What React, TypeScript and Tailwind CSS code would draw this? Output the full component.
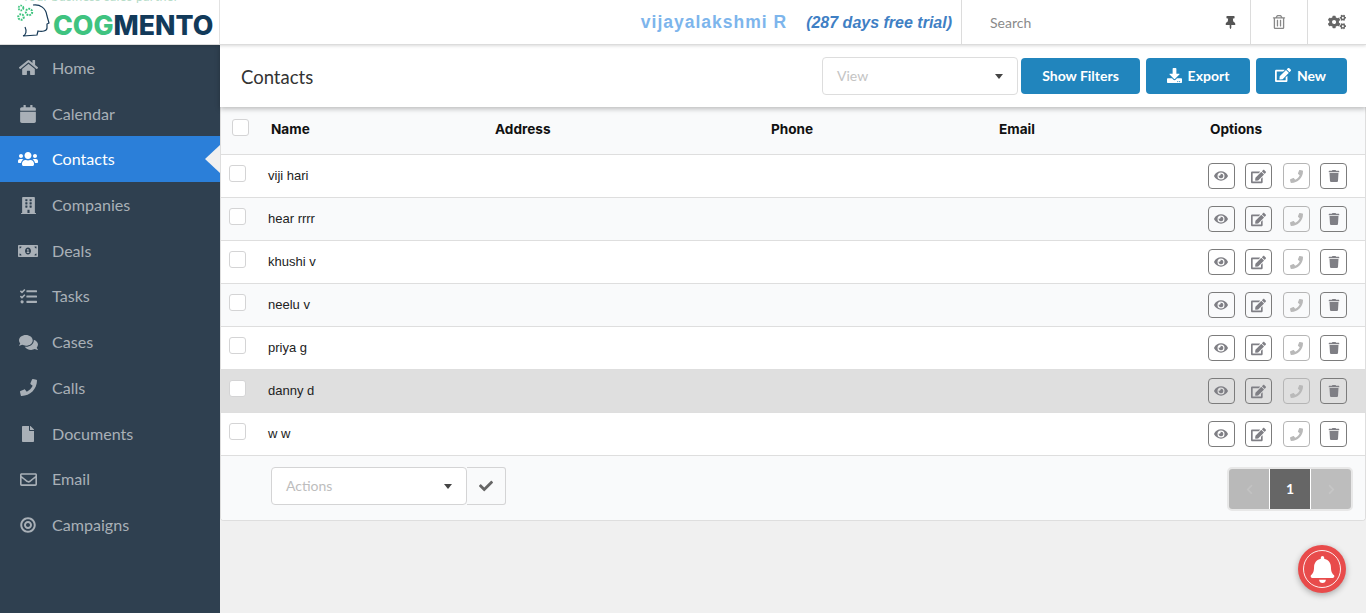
import type { ReactNode } from 'react'
import {
  FaHome,
  FaCalendar,
  FaUsers,
  FaBuilding,
  FaMoneyBillAlt,
  FaTasks,
  FaComments,
  FaPhone,
  FaFile,
  FaRegEnvelope,
  FaBullseye,
  FaEye,
  FaEdit,
  FaTrash,
  FaThumbtack,
  FaRegTrashAlt,
  FaCogs,
  FaDownload,
  FaCheck,
  FaBell,
  FaChevronLeft,
  FaChevronRight,
} from 'react-icons/fa'

const navItems = [
  { label: 'Home', icon: <FaHome size={19} /> },
  { label: 'Calendar', icon: <FaCalendar size={18} /> },
  { label: 'Contacts', icon: <FaUsers size={20} />, active: true },
  { label: 'Companies', icon: <FaBuilding size={17} /> },
  { label: 'Deals', icon: <FaMoneyBillAlt size={20} /> },
  { label: 'Tasks', icon: <FaTasks size={17} /> },
  { label: 'Cases', icon: <FaComments size={19} /> },
  { label: 'Calls', icon: <FaPhone size={17} /> },
  { label: 'Documents', icon: <FaFile size={16} /> },
  { label: 'Email', icon: <FaRegEnvelope size={17} /> },
  { label: 'Campaigns', icon: <FaBullseye size={16} /> },
]

const contacts = ['viji hari', 'hear rrrr', 'khushi v', 'neelu v', 'priya g', 'danny d', 'w w']

function Logo() {
  return (
    <div className="relative flex h-full w-[220px] shrink-0 items-center overflow-hidden border-r border-[#e2e2e2] bg-white">
      <span className="absolute left-[22px] top-[-12px] font-['Lato',sans-serif] text-[12.5px] tracking-wide whitespace-nowrap text-[#b6dcc8]">
        Your business sales partner
      </span>
      <svg width="34" height="35" viewBox="0 0 34 35" className="ml-[16px] mt-[3px] shrink-0 self-start" fill="none">
        <path
          d="M7 33C10 32 11 28 9 24M17 2C24 1 30 5 31 13L33 20 31 21V25C31 28 26 29 22 28L21 32 7 33"
          stroke="#173a57"
          strokeWidth="1.200"
        />
        <circle cx="5" cy="5" r="2.400" stroke="#3dc47e" strokeWidth="1.800" strokeDasharray="1.500 0.900" />
        <circle cx="13" cy="9" r="3.200" stroke="#3dc47e" strokeWidth="2" strokeDasharray="1.800 1" />
        <circle cx="5" cy="14" r="2.800" stroke="#3dc47e" strokeWidth="2" strokeDasharray="1.800 1" />
      </svg>
      <span className="ml-[3px] mt-[7px] font-['Inter',sans-serif] text-[26.7px] font-extrabold leading-none">
        <span className="text-[#3fc380]">COG</span>
        <span className="text-[#123a5a]">MENTO</span>
      </span>
    </div>
  )
}

function Header() {
  return (
    <header className="relative z-20 flex h-[45px] shrink-0 border-b border-[#dcdcdc] bg-white shadow-[0_1px_3px_rgba(0,0,0,0.15)]">
      <Logo />
      <div className="flex flex-1 items-center justify-end pr-[9px] pt-[1px] font-['Liberation_Sans',sans-serif] font-bold">
        <span className="text-[17.5px] tracking-[1px] text-[#7db5ec]">vijayalakshmi R</span>
        <span className="ml-[19px] text-[16px] italic text-[#3f80c4]">(287 days free trial)</span>
      </div>
      <div className="flex w-[289px] items-center border-l border-[#dcdcdc] pl-[28px] pr-[13px] font-['Lato',sans-serif] text-[14px] text-[#8a8a8a]">
        <span className="flex-1">Search</span>
        <FaThumbtack size={13} className="text-[#555]" />
      </div>
      <div className="flex w-[57px] items-center justify-center border-l border-[#dcdcdc] text-[#888]">
        <FaRegTrashAlt size={14} />
      </div>
      <div className="flex w-[59px] items-center justify-center border-l border-[#dcdcdc] text-[#666]">
        <FaCogs size={18} />
      </div>
    </header>
  )
}

function Sidebar() {
  return (
    <nav className="flex w-[220px] shrink-0 flex-col bg-[#2f4050] font-['Lato',sans-serif] text-[16.100px]">
      {navItems.map((item) => (
        <div
          key={item.label}
          className={`relative flex h-[45.72px] items-center ${item.active ? 'bg-[#2b7fd9] text-white' : 'text-[#a9b0b7]'}`}
        >
          <span className="flex w-[52px] shrink-0 justify-center pl-[4px]">{item.icon}</span>
          {item.label}
          {item.active && (
            <span className="absolute right-0 top-1/2 h-0 w-0 -translate-y-1/2 border-y-[14px] border-r-[15px] border-y-transparent border-r-[#f0f0f0]" />
          )}
        </div>
      ))}
    </nav>
  )
}

function Toolbar() {
  return (
    <div className="relative z-10 flex h-[62px] shrink-0 items-center bg-white pl-[21px] pr-[19px] shadow-[0_2px_5px_rgba(0,0,0,0.25)]">
      <h1 className="flex-1 pt-[4px] font-['Lato',sans-serif] text-[18.500px] font-normal text-[#333]">Contacts</h1>
      <div className="flex h-[38px] w-[196px] items-center rounded-[4px] border border-[#ddd] pl-[14px] pr-[14px] font-['Lato',sans-serif] text-[14px] text-[#c4c4c4]">
        <span className="flex-1 pb-[2px]">View</span>
        <Caret />
      </div>
      <ToolButton className="ml-[3px] w-[119px]">Show Filters</ToolButton>
      <ToolButton className="ml-[6px] w-[104px]" icon={<FaDownload size={15} />}>
        Export
      </ToolButton>
      <ToolButton className="ml-[6px] w-[91px] pr-[2px]" icon={<FaEdit size={16} />}>
        New
      </ToolButton>
    </div>
  )
}

function ToolButton({ children, icon, className }: { children: ReactNode; icon?: ReactNode; className: string }) {
  return (
    <button
      className={`flex h-[36px] items-center justify-center gap-[6px] rounded-[4px] bg-[#2185bd] pb-[2px] font-['Lato',sans-serif] text-[14px] font-bold text-white ${className}`}
    >
      {icon}
      {children}
    </button>
  )
}

function Caret() {
  return <span className="h-0 w-0 border-x-[4px] border-t-[5px] border-x-transparent border-t-[#444]" />
}

function Checkbox() {
  return <span className="block h-[17px] w-[17px] rounded-[3px] border border-[#d4d4d5] bg-white" />
}

function ActionIcon({ children, faded }: { children: ReactNode; faded?: boolean }) {
  return (
    <span
      className={`flex h-[26px] w-[27px] items-center justify-center rounded-[4px] border ${
        faded ? 'border-[#b5b5b5] text-[#b9b9b9]' : 'border-[#7c7c7c] text-[#7f7f85]'
      }`}
    >
      {children}
    </span>
  )
}

function ContactRow({ name, index }: { name: string; index: number }) {
  const hovered = name === 'danny d'
  const bg = hovered ? 'bg-[#dfdfdf]' : index % 2 === 1 ? 'bg-[#f9fafb]' : 'bg-white'
  return (
    <div className={`flex h-[43px] items-center border-b border-[#dedede] pl-[8px] pr-[18px] ${bg}`}>
      <div className="mt-[-5px] w-[39px]">
        <Checkbox />
      </div>
      <span className="flex-1 font-['Liberation_Sans',sans-serif] text-[13px] text-[#222]">{name}</span>
      <div className="flex gap-[10.4px]">
        <ActionIcon>
          <FaEye size={14} />
        </ActionIcon>
        <ActionIcon>
          <FaEdit size={15} />
        </ActionIcon>
        <ActionIcon faded>
          <FaPhone size={13} />
        </ActionIcon>
        <ActionIcon>
          <FaTrash size={12} />
        </ActionIcon>
      </div>
    </div>
  )
}

function ContactsTable() {
  return (
    <div className="overflow-hidden rounded-b-[4px] border-x border-b border-[#dedede] bg-white">
      <div className="flex h-[48px] items-center border-b border-[#dedede] bg-[#f9fafb] pb-[2px] pl-[11px] font-['Inter',sans-serif] text-[13.6px] font-bold text-[#111]">
        <div className="mt-[-5px] w-[39px]">
          <Checkbox />
        </div>
        <span className="w-[224px]">Name</span>
        <span className="w-[276px]">Address</span>
        <span className="w-[228px]">Phone</span>
        <span className="w-[211px]">Email</span>
        <span>Options</span>
      </div>
      {contacts.map((name, i) => (
        <ContactRow key={name} name={name} index={i} />
      ))}
      <div className="flex h-[64px] items-start bg-[#f9fafb] pl-[50px] pr-[12px] pt-[11px]">
        <div className="flex h-[38px] w-[196px] items-center rounded-[4px] border border-[#d4d4d5] bg-white pl-[14px] pr-[14px] font-['Lato',sans-serif] text-[14px] text-[#bdbdbd]">
          <span className="flex-1 pb-[2px]">Actions</span>
          <Caret />
        </div>
        <button className="flex h-[38px] w-[39px] items-center justify-center rounded-r-[3px] border border-l-0 border-[#d4d4d5] text-[#666]">
          <FaCheck size={14} />
        </button>
        <div className="ml-auto flex h-[44px] w-[126px] overflow-hidden rounded-[5px] border-2 border-[#e8e8e8] font-['Lato',sans-serif] text-[14px] font-bold">
          <span className="flex flex-1 items-center justify-center bg-[#b9b9b9] text-[#c2c2c2]">
            <FaChevronLeft size={11} />
          </span>
          <span className="flex w-[42px] items-center justify-center border-x border-white bg-[#666] pb-[2px] text-white">1</span>
          <span className="flex flex-1 items-center justify-center bg-[#bdbdbd] text-[#c6c6c6]">
            <FaChevronRight size={11} />
          </span>
        </div>
      </div>
    </div>
  )
}

export default function App() {
  return (
    <div className="flex h-[613px] w-[1366px] flex-col overflow-hidden bg-[#f0f0f0]">
      <Header />
      <div className="flex min-h-0 flex-1">
        <Sidebar />
        <main className="flex min-w-0 flex-1 flex-col">
          <Toolbar />
          <ContactsTable />
        </main>
      </div>
      <div className="fixed left-[1298px] top-[545px] flex h-[48px] w-[48px] items-center justify-center rounded-full bg-[#e84b4b] shadow-[0_2px_6px_rgba(0,0,0,0.3)]">
        <span className="flex h-[38px] w-[38px] items-center justify-center rounded-full border-[1.5px] border-white/90 text-white">
          <FaBell size={27} />
        </span>
      </div>
    </div>
  )
}
